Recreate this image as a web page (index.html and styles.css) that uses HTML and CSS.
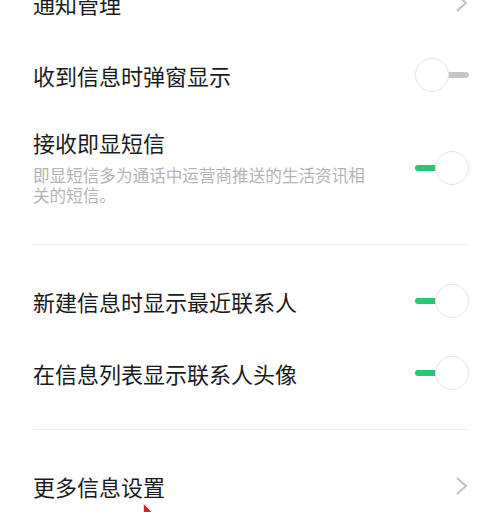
FILE: index.html
```html
<!DOCTYPE html>
<html lang="zh-CN">
<head>
<meta charset="utf-8">
<link rel="stylesheet" href="styles.css">
</head>
<body>
<div class="page">
  <div class="list">
    <div class="row">
      <div class="title">通知管理</div>
      <svg class="chevron" viewBox="0 0 12 18"><path d="M1.5 1.5 L10 9 L1.5 16.5" /></svg>
    </div>
    <div class="row">
      <div class="title">收到信息时弹窗显示</div>
      <div class="switch off"><span class="track"></span><span class="knob"></span></div>
    </div>
    <div class="row tall">
      <div class="texts">
        <div class="title">接收即显短信</div>
        <div class="sub">即显短信多为通话中运营商推送的生活资讯相关的短信。</div>
      </div>
      <div class="switch on"><span class="track"></span><span class="knob"></span></div>
    </div>
    <div class="divider"></div>
    <div class="row">
      <div class="title">新建信息时显示最近联系人</div>
      <div class="switch on"><span class="track"></span><span class="knob"></span></div>
    </div>
    <div class="row">
      <div class="title">在信息列表显示联系人头像</div>
      <div class="switch on"><span class="track"></span><span class="knob"></span></div>
    </div>
    <div class="divider"></div>
    <div class="row">
      <div class="title">更多信息设置</div>
      <svg class="chevron" viewBox="0 0 12 18"><path d="M1.5 1.5 L10 9 L1.5 16.5" /></svg>
    </div>
  </div>
  <svg class="cursor" viewBox="0 0 12 12"><path d="M1 0 L12 12 L1 12 Z" /></svg>
</div>
</body>
</html>
```

FILE: styles.css
```css
html, body {
  margin: 0;
  padding: 0;
  background: #ffffff;
}
body {
  width: 500px;
  height: 512px;
  overflow: hidden;
  font-family: "Noto Sans CJK SC", "Noto Sans", sans-serif;
}
.page {
  position: relative;
  height: 512px;
  overflow: hidden;
}
.list {
  margin-top: -33px;
  padding: 0 31px 0 33px;
}
.row {
  height: 72px;
  display: flex;
  align-items: center;
  justify-content: space-between;
}
.row.tall {
  height: 113px;
  align-items: flex-start;
}
.row.tall .switch {
  align-self: center;
}
.texts {
  display: flex;
  flex-direction: column;
  padding-top: 16px;
}
.title {
  font-size: 22px;
  line-height: 30px;
  color: #1a1a1a;
  white-space: nowrap;
}
.sub {
  margin-top: 8px;
  width: 345px;
  font-size: 16.6px;
  line-height: 20px;
  color: #b4b4b4;
}
.divider {
  height: 1px;
  background: #ececec;
  margin: 20px 0;
}
.chevron {
  width: 12px;
  height: 18px;
  margin-right: 1px;
  fill: none;
  stroke: #c2c2c2;
  stroke-width: 2;
  stroke-linecap: round;
  stroke-linejoin: round;
}
.switch {
  position: relative;
  width: 54px;
  height: 34px;
  flex: none;
}
.knob {
  position: absolute;
  top: 0;
  width: 32px;
  height: 32px;
  border: 1px solid #e4e4e4;
  border-radius: 50%;
  background: #fff;
}
.track {
  position: absolute;
  top: 14px;
  height: 6px;
  border-radius: 3px;
}
.switch.on .knob { right: 0; }
.switch.on .track {
  left: 0;
  width: 26px;
  background: #2bc476;
}
.switch.off .knob { left: 0; }
.switch.off .track {
  right: 0;
  width: 24px;
  background: #c6c6c6;
}
.cursor {
  position: absolute;
  left: 143px;
  top: 504px;
  width: 10px;
  height: 10px;
  fill: #d8202a;
}
```
